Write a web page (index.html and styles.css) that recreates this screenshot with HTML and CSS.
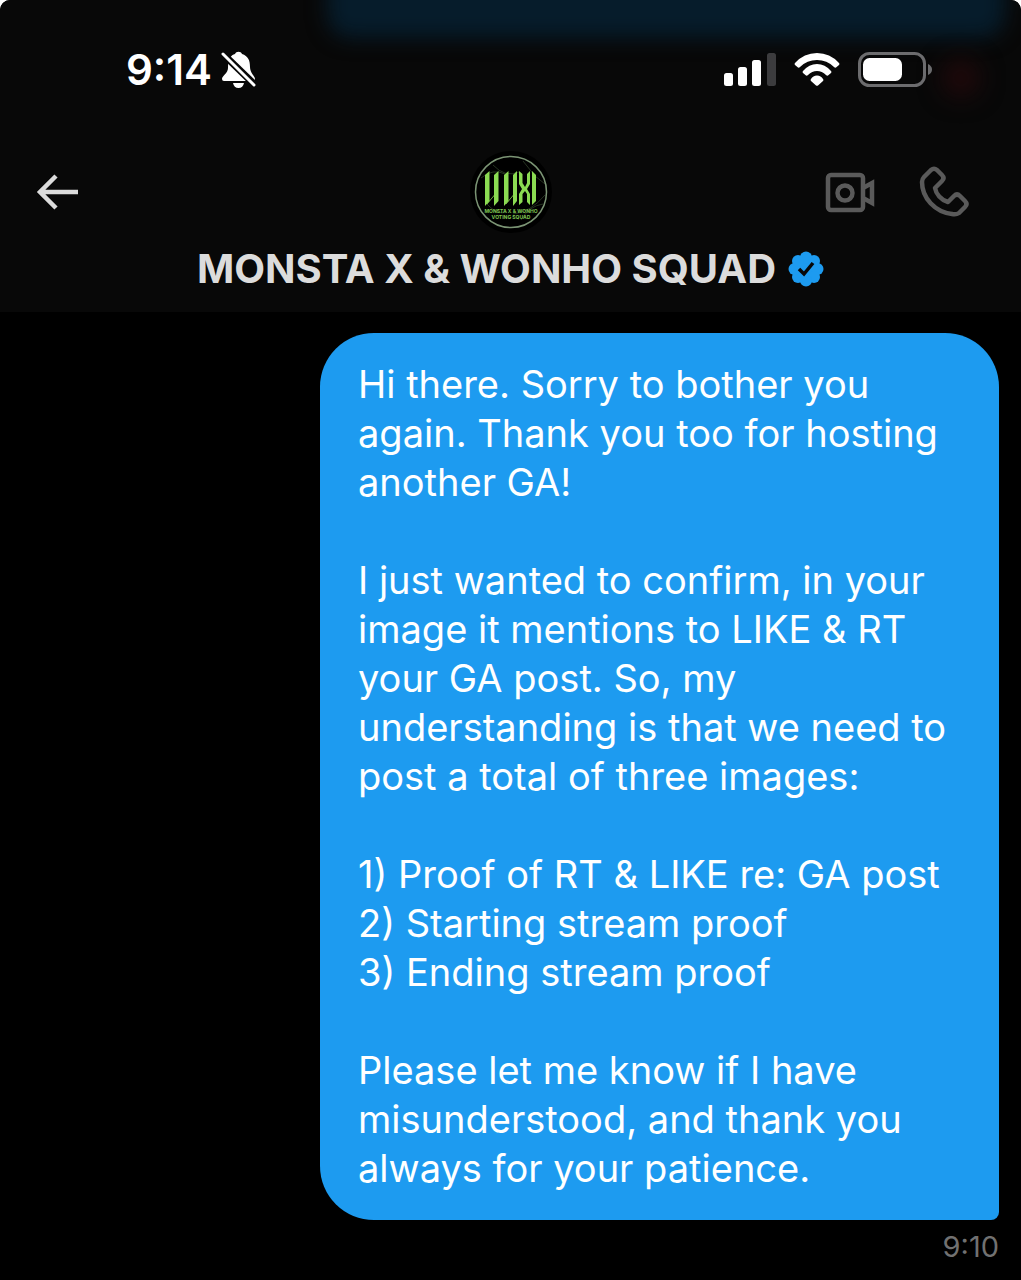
FILE: index.html
```
<!DOCTYPE html>
<html lang="en">
<head>
	<meta charset="UTF-8">
	<meta name="viewport" content="width=device-width, initial-scale=1">
	<title>MONSTA X &amp; WONHO SQUAD</title>
	<link rel="stylesheet" href="styles.css">
</head>
<body>
	<div class="app">
		<header class="top">
			<div class="status">
				<div class="status-left">
					<span class="clock">9:14</span>
					<svg class="bell" width="36" height="38" viewBox="0 0 36 38">
						<path fill="#fff" d="M1 28C1 25 7 22 7 17C7 8 10 4 14 3C15 0 20 0 21 3C27 5 29 9 29 16C29 22 34 25 34 28Q34 30 32 30H3Q1 30 1 28ZM12 32H23Q22 37 17.500 37Q13 37 12 32Z"/>
						<path stroke="#080808" stroke-width="7" d="M1 2L35 35"/>
						<path stroke="#fff" stroke-width="3" stroke-linecap="round" d="M2 3L33 34"/>
					</svg>
				</div>
				<div class="status-right">
					<svg width="52" height="34" viewBox="0 0 52 34" fill="#fff">
						<rect x="0" y="20" width="9" height="13" rx="2.500"/>
						<rect x="14" y="14" width="9" height="19" rx="2.500"/>
						<rect x="28" y="7" width="9" height="26" rx="2.500"/>
						<rect x="43" y="0" width="9" height="33" rx="2.500" fill="#3c3c3e"/>
					</svg>
					<svg width="46" height="34" viewBox="0 0 46 34" fill="#fff">
						<path d="M1 10Q10 0 23 0Q36 0 45 10Q46 11 45 12L42 14.500Q41 15 40 14Q33 7 23 7Q13 7 6 14Q5 15 4 14.500L1 12Q0 11 1 10Z"/>
						<path d="M9 18Q15 11 23 11Q31 11 37 18Q38 19 37 20L34 22.500Q33 23 32 22Q28 18 23 18Q18 18 14 22Q13 23 12 22.500L9 20Q8 19 9 18Z"/>
						<path d="M17 26Q19 22.500 23 22.500Q27 22.500 29 26Q30 27 29 28L24 32.500Q23 33 22 32.500L17 28Q16 27 17 26Z"/>
					</svg>
					<svg width="74" height="36" viewBox="0 0 74 36">
						<rect x="1.500" y="1.500" width="65" height="32" rx="10" fill="none" stroke="#6c6c6e" stroke-width="3"/>
						<rect x="5" y="6" width="39" height="23" rx="6.500" fill="#fff"/>
						<path fill="#6c6c6e" d="M70 12Q74 14 74 17.500Q74 21 70 23Z"/>
					</svg>
				</div>
			</div>

			<nav class="bar">
				<button class="icon-btn" type="button" aria-label="Back">
					<svg width="44" height="38" viewBox="0 0 44 38" fill="none" stroke="#dcdcdc" stroke-width="4.500">
						<path d="M20 3L4 19L20 35M4 19H42"/>
					</svg>
				</button>
				<svg class="avatar" width="84" height="84" viewBox="0 0 84 84">
					<circle cx="42" cy="42" r="41" fill="#000"/>
					<g fill="none" stroke="#263321" stroke-width="1">
						<path d="M12 28Q24 18 36 24M54 11L66 26L76 34M16 52Q28 66 38 62M44 64Q62 62 76 45M52 70Q60 56 74 54M24 15Q36 28 50 22"/>
					</g>
					<circle cx="42" cy="42" r="35.500" fill="none" stroke="#7b9474" stroke-width="1.500"/>
					<g fill="#8bdb52">
						<path d="M16 25L20.500 21V51L16 56ZM25 25L29.500 21V51L25 56ZM35 25L39.500 21V51L35 56ZM44 25L48 21V51L44 56Z"/>
						<path d="M50 21L53.500 24V33L56 37L58 33V24L61 21V34L58 39L61 44V55L58 52V44L56 41L53.500 44V52L50 55V44L53 39L50 34ZM63 21L67 25V51L63 55Z"/>
					</g>
					<path fill="none" stroke="#8bdb52" stroke-width="0.800" d="M18 54L28 42M37 54L47 42"/>
					<g class="avatar-text" fill="#7fc552">
						<text x="42" y="63">MONSTA X &amp; WONHO</text>
						<text x="42" y="69">VOTING SQUAD</text>
					</g>
				</svg>
				<div class="actions">
					<button class="icon-btn" type="button" aria-label="Video call">
						<svg width="50" height="42" viewBox="0 0 50 42" fill="none" stroke="#5a5a5a" stroke-width="4.500">
							<rect x="3" y="4" width="35" height="35" rx="3"/>
							<circle cx="20" cy="22" r="7.500"/>
							<path d="M38 17L47 12V32L38 27"/>
						</svg>
					</button>
					<button class="icon-btn" type="button" aria-label="Voice call">
						<svg width="50" height="52" viewBox="0 0 50 52" fill="none" stroke="#5a5a5a" stroke-width="4.500" stroke-linejoin="round">
							<path d="M5 11L12 4Q15 1.500 18 4L23 9Q26 12 23 15L16 22C17 28 22 34 29 36L35 30Q38 27 41 30L46 35Q49 38 46 41L40 47Q37 49 33 48C16 46 3 32 3 16Q3 13 5 11Z"/>
						</svg>
					</button>
				</div>
			</nav>

			<h1 class="name">
				MONSTA X &amp; WONHO SQUAD
				<svg width="36" height="36" viewBox="0 0 36 36" role="img" aria-label="Verified">
					<g fill="#1d9bf0">
						<circle cx="18" cy="18" r="14"/>
						<circle cx="18" cy="6.500" r="6"/>
						<circle cx="26" cy="10" r="6"/>
						<circle cx="29.500" cy="18" r="6"/>
						<circle cx="26" cy="26" r="6"/>
						<circle cx="18" cy="29.500" r="6"/>
						<circle cx="10" cy="26" r="6"/>
						<circle cx="6.500" cy="18" r="6"/>
						<circle cx="10" cy="10" r="6"/>
					</g>
					<path fill="none" stroke="#080808" stroke-width="3.500" d="M11 18L16 23L25 12"/>
				</svg>
			</h1>
		</header>

		<main class="chat">
			<div class="bubble">
				<p>Hi there. Sorry to bother you again. Thank you too for hosting another GA!</p>
				<p>I just wanted to confirm, in your image it mentions to LIKE &amp; RT your GA post. So, my understanding is that we need to post a total of three images:</p>
				<p>1) Proof of RT &amp; LIKE re: GA post<br>2) Starting stream proof<br>3) Ending stream proof</p>
				<p>Please let me know if I have misunderstood, and thank you always for your patience.</p>
			</div>
			<time class="sent">9:10</time>
		</main>
	</div>
</body>
</html>
```

FILE: styles.css
```
* {
	box-sizing: border-box;
}
body, p, h1 {
	margin: 0;
}
body {
	background: #fff;
	font-family: Inter, "Liberation Sans", sans-serif;
}
svg {
	display: block;
	flex: none;
}

.app {
	min-height: 100vh;
	background: #000;
	border-radius: 10px 10px 0 0;
	overflow: hidden;
}

/* header */
.top {
	position: relative;
	z-index: 0;
	padding: 45px 36px 18px;
	background: #080808;
	overflow: hidden;
}
/* bubble and badge showing through the frosted bar */
.top::before,
.top::after {
	content: "";
	position: absolute;
	z-index: -1;
}
.top::before {
	top: -60px;
	left: 32%;
	right: 16px;
	height: 98px;
	border-radius: 24px;
	background: #061c2b;
	filter: blur(10px);
}
.top::after {
	top: 60px;
	right: 42px;
	width: 36px;
	height: 36px;
	border-radius: 50%;
	background: #22090b;
	filter: blur(12px);
}

.status {
	display: flex;
	justify-content: space-between;
	align-items: center;
	height: 50px;
	padding: 0 53px 0 90px;
}
.status-left {
	display: flex;
	align-items: center;
	gap: 9px;
}
.status-right {
	display: flex;
	align-items: center;
	gap: 18px;
}
.clock {
	color: #fff;
	font-size: 42px;
	font-weight: 600;
	line-height: 50px;
}

.bar {
	display: grid;
	grid-template-columns: 1fr auto 1fr;
	align-items: center;
	margin-top: 55px;
}
.icon-btn {
	justify-self: start;
	padding: 0;
	border: 0;
	background: none;
	cursor: pointer;
}
.avatar-text {
	font-size: 5px;
	font-weight: 700;
	text-anchor: middle;
}
.actions {
	display: flex;
	justify-content: flex-end;
	align-items: center;
	gap: 44px;
	padding-right: 16px;
}
.name {
	display: flex;
	justify-content: center;
	align-items: center;
	gap: 12px;
	margin-top: 10px;
	color: #dcdcdc;
	font-size: 40px;
	font-weight: 700;
	line-height: 50px;
}

/* messages */
.chat {
	display: flex;
	flex-direction: column;
	align-items: flex-end;
	padding: 21px 22px 12px;
}
.bubble {
	width: 69.5%;
	padding: 27px 38px;
	border-radius: 54px 54px 8px 54px;
	background: #1d9bf0;
	color: #fff;
	font-size: 38px;
	line-height: 49px;
}
.bubble p + p {
	margin-top: 49px;
}
.sent {
	margin-top: 10px;
	color: #717171;
	font-size: 29px;
	line-height: 34px;
}
```
